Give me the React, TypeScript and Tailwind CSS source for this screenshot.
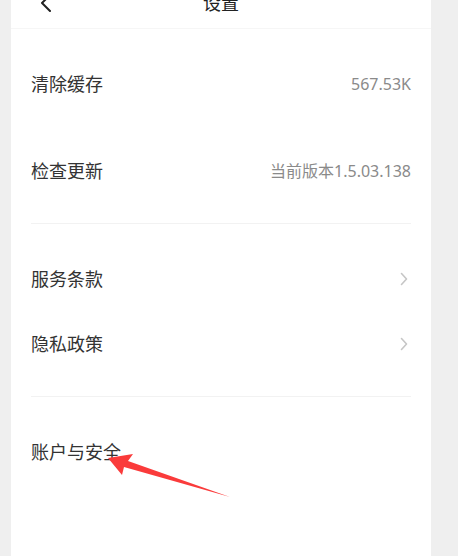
import { ReactNode } from "react";

const font = {
  fontFamily: '"Noto Sans", "Noto Sans CJK SC", sans-serif',
};

const Chevron = () => (
  <svg width="8" height="14" viewBox="0 0 8 14" className="mr-[3px]">
    <polyline
      points="1.5,1.5 6.5,7 1.5,12.5"
      fill="none"
      stroke="#c6c6c6"
      strokeWidth="1.6"
      strokeLinecap="round"
      strokeLinejoin="round"
    />
  </svg>
);

type RowProps = {
  label: string;
  value?: string;
  arrow?: boolean;
};

const Row = ({ label, value, arrow }: RowProps) => (
  <div className="flex h-[65px] items-center justify-between">
    <span className="text-[18px] leading-6 text-[#333333]">{label}</span>
    {value && (
      <span className="text-[16px] leading-6 text-[#8a8a8a]">{value}</span>
    )}
    {arrow && <Chevron />}
  </div>
);

const Section = ({
  children,
  gap,
  last,
}: {
  children: ReactNode;
  gap?: boolean;
  last?: boolean;
}) => (
  <div
    className={`flex flex-col pt-[22px] pb-[20px] ${gap ? "gap-[22px]" : ""} ${
      last ? "" : "border-b border-[#f2f2f2]"
    }`}
  >
    {children}
  </div>
);

const App = () => {
  return (
    <div
      className="relative h-[556px] w-[458px] overflow-hidden bg-[#efefef]"
      style={font}
    >
      <div className="ml-[11px] flex h-full w-[420px] flex-col bg-white">
        <div className="-mt-[23px] grid h-[52px] grid-cols-3 items-center border-b border-[#f6f6f6] px-5">
          <div className="flex items-center">
            <svg width="12" height="18" viewBox="0 0 12 18" className="ml-[9px]">
              <polyline
                points="10,1 2,9 10,17"
                fill="none"
                stroke="#222222"
                strokeWidth="2"
                strokeLinecap="round"
                strokeLinejoin="round"
              />
            </svg>
          </div>
          <div className="text-center text-[18px] leading-6 text-[#222222]">
            设置
          </div>
          <div />
        </div>

        <div className="mx-5 flex flex-col">
          <Section gap>
            <Row label="清除缓存" value="567.53K" />
            <Row label="检查更新" value="当前版本1.5.03.138" />
          </Section>
          <Section>
            <Row label="服务条款" arrow />
            <Row label="隐私政策" arrow />
          </Section>
          <Section last>
            <Row label="账户与安全" />
          </Section>
        </div>
      </div>

      {/* red annotation arrow */}
      <svg
        className="pointer-events-none absolute left-0 top-0"
        width="458"
        height="556"
        viewBox="0 0 458 556"
      >
        <polygon
          points="108,458 133,454 128,461 230,497 124,467 122,475"
          fill="#fa3b3b"
        />
      </svg>
    </div>
  );
};

export default App;
